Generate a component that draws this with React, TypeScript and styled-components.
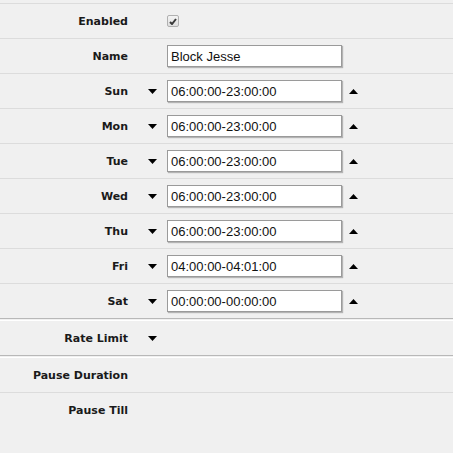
import React from 'react';
import styled, { createGlobalStyle } from 'styled-components';

const GlobalStyle = createGlobalStyle`
  html, body {
    margin: 0;
    padding: 0;
    background: #f0f0f0;
  }
  body {
    font-family: "DejaVu Sans", Verdana, sans-serif;
  }
`;

const Form = styled.div`
  width: 453px;
  height: 453px;
  background: #f0f0f0;
  overflow: hidden;
`;

const TopEdge = styled.div`
  height: 4px;
  box-sizing: border-box;
  border-bottom: 1px solid #dcdcdc;
`;

// rows are 34px of content plus a 1px divider; the last row of a group has no divider
const Row = styled.div<{ $last?: boolean }>`
  display: flex;
  align-items: center;
  height: ${(p) => (p.$last ? '34px' : '35px')};
  box-sizing: border-box;
  border-bottom: ${(p) => (p.$last ? 'none' : '1px solid #dcdcdc')};
`;

const Separator = styled.div`
  height: 3px;
  box-sizing: border-box;
  border-top: 1px solid #b8b8b8;
  border-bottom: 1px solid #ffffff;
`;

const Label = styled.div`
  width: 128px;
  flex: none;
  text-align: right;
  font-family: "DejaVu Sans", Verdana, sans-serif;
  font-weight: bold;
  font-size: 11px;
  color: #1a1a1a;
`;

const Controls = styled.div`
  display: flex;
  align-items: center;
  padding-left: 20px;
`;

const ArrowSlot = styled.div`
  width: 9px;
  height: 5px;
  flex: none;
  margin-right: 10px;
  display: flex;
`;

const UpSlot = styled(ArrowSlot)`
  margin-right: 0;
  margin-left: 7px;
`;

const Field = styled.div`
  width: 175px;
  height: 22px;
  box-sizing: border-box;
  border: 1px solid #9a9a9a;
  background: #ffffff;
  box-shadow: 1px 1px 1px rgba(0, 0, 0, 0.25);
  display: flex;
  align-items: center;
  padding-left: 3px;
  font-family: "Liberation Sans", Arial, sans-serif;
  font-size: 13px;
  color: #111;
`;

const Check = styled.div`
  margin-left: 39px;
  width: 12px;
  height: 12px;
  box-sizing: border-box;
  border: 1px solid #b0b0b0;
  border-radius: 2px;
  background: linear-gradient(#f4f4f4, #dedede);
  display: flex;
  align-items: center;
  justify-content: center;
`;

const Down = () => (
  <svg width="9" height="5" viewBox="0 0 9 5">
    <polygon points="0,0 9,0 4.5,5" fill="#000" />
  </svg>
);

const Up = () => (
  <svg width="9" height="5" viewBox="0 0 9 5">
    <polygon points="0,5 9,5 4.5,0" fill="#000" />
  </svg>
);

const days = [
  { day: 'Sun', time: '06:00:00-23:00:00' },
  { day: 'Mon', time: '06:00:00-23:00:00' },
  { day: 'Tue', time: '06:00:00-23:00:00' },
  { day: 'Wed', time: '06:00:00-23:00:00' },
  { day: 'Thu', time: '06:00:00-23:00:00' },
  { day: 'Fri', time: '04:00:00-04:01:00' },
  { day: 'Sat', time: '00:00:00-00:00:00' },
];

const App: React.FC = () => {
  return (
    <Form>
      <GlobalStyle />
      <TopEdge />
      <Row>
        <Label>Enabled</Label>
        <Check>
          <svg width="8" height="7" viewBox="0 0 8 7">
            <path d="M1 4 L3 6 L7 1" stroke="#3a3a3a" strokeWidth="2" fill="none" />
          </svg>
        </Check>
      </Row>
      <Row>
        <Label>Name</Label>
        <Controls>
          <ArrowSlot />
          <Field>Block Jesse</Field>
        </Controls>
      </Row>
      {days.map((d, i) => (
        <Row key={d.day} $last={i === days.length - 1}>
          <Label>{d.day}</Label>
          <Controls>
            <ArrowSlot>
              <Down />
            </ArrowSlot>
            <Field>{d.time}</Field>
            <UpSlot>
              <Up />
            </UpSlot>
          </Controls>
        </Row>
      ))}
      <Separator />
      <Row $last>
        <Label>Rate Limit</Label>
        <Controls>
          <ArrowSlot>
            <Down />
          </ArrowSlot>
        </Controls>
      </Row>
      <Separator />
      <Row>
        <Label>Pause Duration</Label>
      </Row>
      <Row $last>
        <Label>Pause Till</Label>
      </Row>
    </Form>
  );
};

export default App;
